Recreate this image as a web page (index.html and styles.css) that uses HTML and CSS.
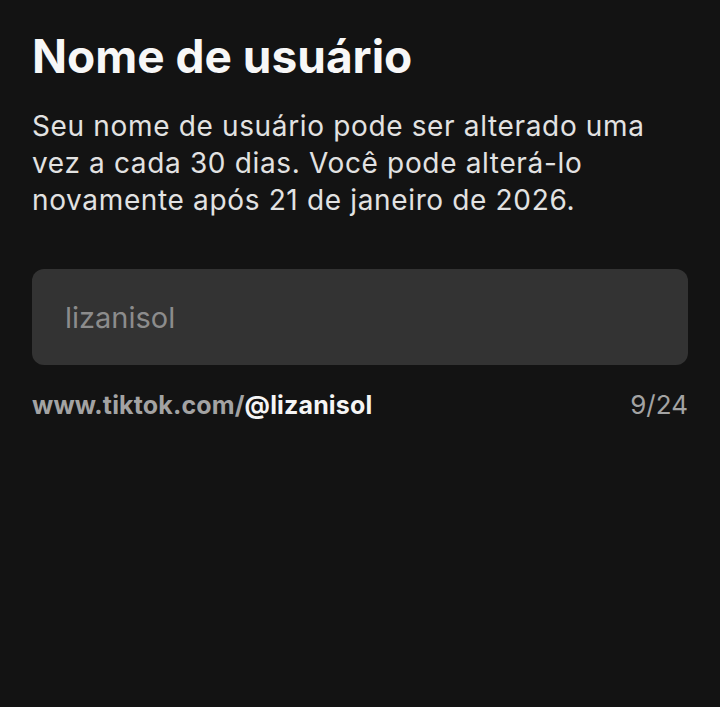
FILE: index.html
```html
<html>
<head>
  <title>Nome de usuário</title>
  <meta charset="utf-8">
  <link rel="stylesheet" href="styles.css">
</head>
<body>
  <div class="page">
    <h1 class="title">Nome de usuário</h1>
    <p class="info">Seu nome de usuário pode ser alterado uma vez a cada 30 dias. Você pode alterá-lo novamente após 21 de janeiro de 2026.</p>
    <div class="field">
      <span class="field-value">lizanisol</span>
    </div>
    <div class="meta">
      <span class="link">www.tiktok.com/<span class="handle">@lizanisol</span></span>
      <span class="count">9/24</span>
    </div>
  </div>
</body>
</html>
```

FILE: styles.css
```css
body {
  margin: 0;
  background-color: #131313;
  font-family: Inter, "Liberation Sans", sans-serif;
  color: #f5f5f5;
}

.page {
  padding: 28px 32px 0 32px;
  display: flex;
  flex-direction: column;
}

.title {
  margin: 0;
  font-size: 46px;
  font-weight: bold;
  line-height: 56px;
  color: #f7f7f7;
}

.info {
  margin: 24px 0 0 0;
  font-size: 28px;
  line-height: 37px;
  letter-spacing: 0.65px;
  color: #e2e2e2;
  width: 650px;
}

.field {
  margin-top: 50px;
  height: 96px;
  background-color: #333333;
  border-radius: 12px;
  display: flex;
  align-items: center;
  padding: 0 33px;
}

.field-value {
  font-size: 29px;
  color: #8c8c8c;
}

.meta {
  margin-top: 24px;
  display: flex;
  justify-content: space-between;
  align-items: baseline;
}

.link {
  font-size: 25px;
  font-weight: bold;
  letter-spacing: 0.15px;
  color: #a3a3a3;
}

.handle {
  color: #f5f5f5;
}

.count {
  font-size: 26px;
  color: #a3a3a3;
}
```
